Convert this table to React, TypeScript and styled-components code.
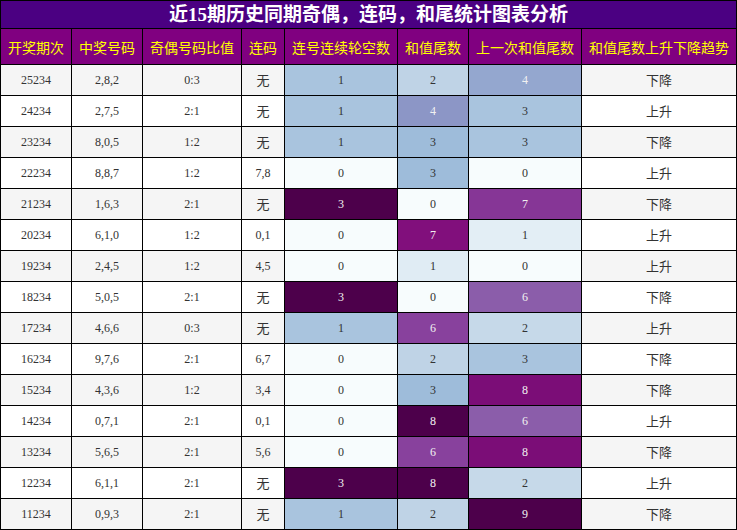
import React from "react";
import styled, { createGlobalStyle } from "styled-components";

const GlobalStyle = createGlobalStyle`
  html, body { margin: 0; padding: 0; background: #ffffff; }
  body { font-family: "Liberation Serif", "Noto Sans CJK SC", serif; }
`;

const Table = styled.div`
  display: grid;
  grid-template-columns: 70px 70px 98px 42px 112px 70px 112px 154px;
  grid-template-rows: 27px 35px repeat(15, 30px);
  gap: 1px;
  padding: 1px;
  width: 737px;
  box-sizing: border-box;
  background: #000000;
`;

const Title = styled.div`
  grid-column: 1 / -1;
  background: #4b0082;
  color: #ffffff;
  font-weight: bold;
  font-size: 19px;
  display: flex;
  align-items: center;
  justify-content: center;
  line-height: 1;
`;

const HeadCell = styled.div`
  background: #800080;
  color: #ffff00;
  font-family: "Noto Sans CJK SC", sans-serif;
  font-size: 14px;
  line-height: 1;
  display: flex;
  align-items: center;
  justify-content: center;
  white-space: nowrap;
`;

const Cell = styled.div<{ $bg: string; $fg?: string; $cjk?: boolean }>`
  background: ${(p) => p.$bg};
  color: ${(p) => p.$fg ?? "#333333"};
  font-family: ${(p) => (p.$cjk ? '"Noto Sans CJK SC", sans-serif' : '"Liberation Serif", serif')};
  font-size: ${(p) => (p.$cjk ? "13px" : "12px")};
  line-height: 1;
  padding-bottom: ${(p) => (p.$cjk ? "2px" : "0")};
  box-sizing: border-box;
  display: flex;
  align-items: center;
  justify-content: center;
  white-space: nowrap;
`;

const STOPS = ["#f7fcfd", "#e0ecf4", "#bfd3e6", "#9ebcda", "#8c96c6", "#8c6bb1", "#88419d", "#810f7c", "#4d004b"];

function hex(c: string) {
  return [1, 3, 5].map((i) => parseInt(c.slice(i, i + 2), 16));
}

function bupu(t: number): [number, number, number] {
  const x = Math.max(0, Math.min(1, t)) * (STOPS.length - 1);
  const i = Math.min(STOPS.length - 2, Math.floor(x));
  const f = x - i;
  const a = hex(STOPS[i]);
  const b = hex(STOPS[i + 1]);
  return [0, 1, 2].map((k) => Math.round(a[k] + (b[k] - a[k]) * f)) as [number, number, number];
}

function lum([r, g, b]: [number, number, number]) {
  const lin = (v: number) => {
    const s = v / 255;
    return s <= 0.03928 ? s / 12.92 : Math.pow((s + 0.055) / 1.055, 2.4);
  };
  return 0.2126 * lin(r) + 0.7152 * lin(g) + 0.0722 * lin(b);
}

function heat(v: number, max: number) {
  const c = bupu(max === 0 ? 0 : v / max);
  return {
    bg: `rgb(${c[0]},${c[1]},${c[2]})`,
    fg: lum(c) < 0.408 ? "#f1f1f1" : "#333333",
  };
}

type Row = [string, string, string, string, number, number, number, string];

const rows: Row[] = [
  ["25234", "2,8,2", "0:3", "无", 1, 2, 4, "下降"],
  ["24234", "2,7,5", "2:1", "无", 1, 4, 3, "上升"],
  ["23234", "8,0,5", "1:2", "无", 1, 3, 3, "下降"],
  ["22234", "8,8,7", "1:2", "7,8", 0, 3, 0, "上升"],
  ["21234", "1,6,3", "2:1", "无", 3, 0, 7, "下降"],
  ["20234", "6,1,0", "1:2", "0,1", 0, 7, 1, "上升"],
  ["19234", "2,4,5", "1:2", "4,5", 0, 1, 0, "上升"],
  ["18234", "5,0,5", "2:1", "无", 3, 0, 6, "下降"],
  ["17234", "4,6,6", "0:3", "无", 1, 6, 2, "上升"],
  ["16234", "9,7,6", "2:1", "6,7", 0, 2, 3, "下降"],
  ["15234", "4,3,6", "1:2", "3,4", 0, 3, 8, "下降"],
  ["14234", "0,7,1", "2:1", "0,1", 0, 8, 6, "上升"],
  ["13234", "5,6,5", "2:1", "5,6", 0, 6, 8, "下降"],
  ["12234", "6,1,1", "2:1", "无", 3, 8, 2, "上升"],
  ["11234", "0,9,3", "2:1", "无", 1, 2, 9, "下降"],
];

const headers = ["开奖期次", "中奖号码", "奇偶号码比值", "连码", "连号连续轮空数", "和值尾数", "上一次和值尾数", "和值尾数上升下降趋势"];

const max5 = Math.max(...rows.map((r) => r[4]));
const max6 = Math.max(...rows.map((r) => r[5]));
const max7 = Math.max(...rows.map((r) => r[6]));

export default function App() {
  return (
    <>
      <GlobalStyle />
      <Table>
        <Title>近15期历史同期奇偶，连码，和尾统计图表分析</Title>
        {headers.map((h) => (
          <HeadCell key={h}>{h}</HeadCell>
        ))}
        {rows.map((r, i) => {
          const base = i % 2 === 0 ? "#f5f5f5" : "#ffffff";
          const h5 = heat(r[4], max5);
          const h6 = heat(r[5], max6);
          const h7 = heat(r[6], max7);
          return (
            <React.Fragment key={r[0]}>
              <Cell $bg={base}>{r[0]}</Cell>
              <Cell $bg={base}>{r[1]}</Cell>
              <Cell $bg={base}>{r[2]}</Cell>
              <Cell $bg={base} $cjk={r[3] === "无"}>{r[3]}</Cell>
              <Cell $bg={h5.bg} $fg={h5.fg}>{r[4]}</Cell>
              <Cell $bg={h6.bg} $fg={h6.fg}>{r[5]}</Cell>
              <Cell $bg={h7.bg} $fg={h7.fg}>{r[6]}</Cell>
              <Cell $bg={base} $cjk>{r[7]}</Cell>
            </React.Fragment>
          );
        })}
      </Table>
    </>
  );
}
